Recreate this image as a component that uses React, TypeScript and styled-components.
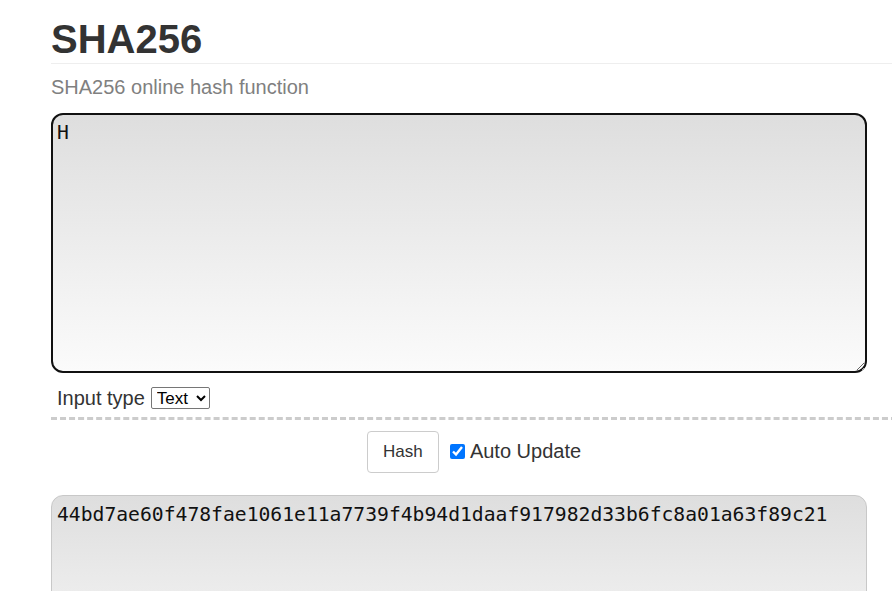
import React, { useState } from "react";
import styled, { createGlobalStyle } from "styled-components";

const GlobalStyle = createGlobalStyle`
  html, body {
    margin: 0;
    padding: 0;
    background: #ffffff;
    overflow: hidden;
  }
  body {
    font-family: "Liberation Sans", Arial, sans-serif;
    color: #333333;
  }
`;

const Page = styled.div`
  width: 846px;
  margin-left: 51px;
`;

const Header = styled.header`
  padding-top: 17px;
  padding-bottom: 2px;
  border-bottom: 1px solid #eeeeee;
`;

const Title = styled.h1`
  margin: 0;
  font-size: 40px;
  line-height: 44px;
  font-weight: 700;
  color: #333333;
`;

const Subtitle = styled.p`
  margin: 12px 0 14px;
  font-size: 20px;
  line-height: 23px;
  color: #808080;
`;

const HashArea = styled.textarea<{ $focused?: boolean }>`
  display: block;
  box-sizing: border-box;
  width: 816px;
  height: ${(p) => (p.$focused ? "260px" : "200px")};
  margin: 0;
  padding: ${(p) => (p.$focused ? "6px 4px" : "7px 5px")};
  border: ${(p) => (p.$focused ? "2px solid #111111" : "1px solid #c8c8c8")};
  border-radius: 12px;
  background: linear-gradient(#dedede, #fbfbfb);
  font-family: "DejaVu Sans Mono", monospace;
  font-size: 19.7px;
  line-height: 23px;
  color: #111111;
  outline: none;
  resize: ${(p) => (p.$focused ? "vertical" : "none")};
`;

const OptionsRow = styled.div`
  display: flex;
  align-items: center;
  gap: 6px;
  padding: 14px 0 8px 6px;
  border-bottom: 3px dashed #cccccc;
`;

const OptionLabel = styled.label`
  font-size: 20px;
  line-height: 22px;
  color: #333333;
`;

const TypeSelect = styled.select`
  box-sizing: border-box;
  width: 59px;
  height: 22px;
  font-family: "Liberation Sans", Arial, sans-serif;
  font-size: 17px;
  color: #000000;
  background: #ffffff;
  border: 1px solid #767676;
  border-radius: 2px;
  padding: 0 1px;
`;

const ActionRow = styled.div`
  display: flex;
  justify-content: center;
  align-items: center;
  margin: 11px 0 22px;
`;

const HashButton = styled.button`
  box-sizing: border-box;
  width: 72px;
  height: 42px;
  background: #ffffff;
  border: 1px solid #cccccc;
  border-radius: 4px;
  font-family: "Liberation Sans", Arial, sans-serif;
  font-size: 17px;
  color: #333333;
  cursor: pointer;
`;

const AutoLabel = styled.label`
  display: flex;
  align-items: center;
  gap: 5px;
  margin-left: 11px;
  margin-top: -1px;
  font-size: 20px;
  color: #333333;
`;

const Check = styled.input`
  width: 15px;
  height: 15px;
  margin: 0;
  accent-color: #0075ff;
`;

export default function App() {
  const [text, setText] = useState("H");
  return (
    <>
      <GlobalStyle />
      <Page>
        <Header>
          <Title>SHA256</Title>
        </Header>
        <Subtitle>SHA256 online hash function</Subtitle>
        <HashArea
          $focused
          value={text}
          onChange={(e) => setText(e.target.value)}
          spellCheck={false}
        />
        <OptionsRow>
          <OptionLabel>Input type</OptionLabel>
          <TypeSelect defaultValue="text">
            <option value="text">Text</option>
            <option value="hex">Hex</option>
          </TypeSelect>
        </OptionsRow>
        <ActionRow>
          <HashButton>Hash</HashButton>
          <AutoLabel>
            <Check type="checkbox" defaultChecked />
            Auto Update
          </AutoLabel>
        </ActionRow>
        <HashArea
          readOnly
          spellCheck={false}
          value="44bd7ae60f478fae1061e11a7739f4b94d1daaf917982d33b6fc8a01a63f89c21"
        />
      </Page>
    </>
  );
}
